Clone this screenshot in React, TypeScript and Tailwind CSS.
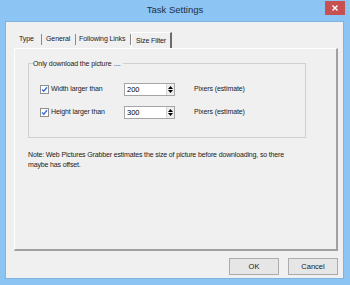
import React from "react"

const font = { fontFamily: '"Liberation Sans", Arial, sans-serif' }

function Check() {
  return (
    <span className="flex h-[9px] w-[9px] items-center justify-center border border-[#8f8f8f] bg-white">
      <svg width="7" height="7" viewBox="0 0 7 7">
        <path d="M1 3.5 L2.8 5.3 L6 1.3" stroke="#3a6fd1" strokeWidth="1.4" fill="none" />
      </svg>
    </span>
  )
}

function Spin({ value }: { value: string }) {
  return (
    <div className="flex h-[13px] w-[51px] border border-[#a5a5a5] bg-white">
      <span className="flex-1 pl-[2px] text-[7.5px] leading-[11px] text-black">{value}</span>
      <div className="flex w-[8px] flex-col items-center justify-center gap-[1px] border-l border-[#d6d6d6] bg-[#eeeeee]">
        <svg width="5" height="3" viewBox="0 0 5 3"><path d="M0 3 L2.5 0 L5 3 Z" fill="#000" /></svg>
        <svg width="5" height="3" viewBox="0 0 5 3"><path d="M0 0 L2.5 3 L5 0 Z" fill="#000" /></svg>
      </div>
    </div>
  )
}

function Row({ label, value }: { label: string; value: string }) {
  return (
    <div className="flex items-center">
      <div className="flex w-[84px] items-center gap-[2px]">
        <Check />
        <span className="whitespace-nowrap text-[7px] tracking-[-0.1px] text-[#1a1a1a]">{label}</span>
      </div>
      <Spin value={value} />
      <span className="ml-[19px] whitespace-nowrap text-[7px] tracking-[-0.1px] text-[#1a1a1a]">Pixers (estimate)</span>
    </div>
  )
}

export default function App() {
  return (
    <div className="flex h-[285px] w-[350px] flex-col bg-[#8cc4f4]" style={font}>
      <div className="relative flex h-[21px] items-center justify-center">
        <span className="text-[9.5px] text-[#1f2f44]">Task Settings</span>
        <div className="absolute right-[5px] top-[1px] flex h-[14px] w-[20px] items-center justify-center bg-[#c75050]">
          <svg width="6" height="6" viewBox="0 0 6 6">
            <path d="M0.5 0.5 L5.5 5.5 M5.5 0.5 L0.5 5.5" stroke="#fff" strokeWidth="1.4" />
          </svg>
        </div>
      </div>
      <div className="ml-[5px] flex h-[258px] w-[339px] flex-col border border-[#7eb3e2] bg-[#f0f0f0] pl-[8px] pr-[5px]">
        <div className="mt-[10px] flex h-[16px] items-start text-[7px] tracking-[-0.1px] text-[#1a1a1a]">
          <div className="mt-[2px] flex h-[11px] w-[28px] items-center whitespace-nowrap border-r border-[#8a8a8a] pl-[5px]">Type</div>
          <div className="mt-[2px] flex h-[11px] w-[34px] items-center whitespace-nowrap border-r border-[#8a8a8a] pl-[4px]">General</div>
          <div className="mt-[2px] flex h-[11px] w-[55px] items-center whitespace-nowrap border-r border-[#8a8a8a] pl-[3px]">Following Links</div>
          <div className="flex h-[17px] w-[41px] items-center whitespace-nowrap border-l border-r-2 border-t border-[#6c6c6c] border-l-white border-t-white pl-[4px]">Size Filter</div>
        </div>
        <div className="flex h-[203px] w-[324px] flex-col border-b-2 border-l border-r-2 border-t border-[#a0a0a0] border-l-white border-t-white pl-[13px]">
          <div className="relative mt-[14px] h-[75px] w-[278px] border border-[#d0d0d0]">
            <span className="absolute left-[4px] top-[-5px] whitespace-nowrap bg-[#f0f0f0] pr-[2px] text-[7px] leading-[10px] tracking-[-0.1px] text-[#1a1a1a]">Only download the picture ....</span>
            <div className="ml-[11px] mt-[19px] flex flex-col gap-[10px]">
              <Row label="Width larger than" value="200" />
              <Row label="Height larger than" value="300" />
            </div>
          </div>
          <p className="mt-[12px] whitespace-nowrap text-[7px] leading-[9.5px] tracking-[-0.15px] text-[#1a1a1a]">
            Note: Web Pictures Grabber estimates the size of picture before downloading, so there
            <br />
            maybe has offset.
          </p>
        </div>
        <div className="mt-[7px] flex justify-end gap-[9px]">
          <div className="flex h-[17px] w-[50px] items-center justify-center border border-[#acacac] bg-[#e6e6e6] text-[7.5px] text-[#1a1a1a]">OK</div>
          <div className="flex h-[17px] w-[50px] items-center justify-center border border-[#acacac] bg-[#e6e6e6] text-[7.5px] text-[#1a1a1a]">Cancel</div>
        </div>
      </div>
    </div>
  )
}
